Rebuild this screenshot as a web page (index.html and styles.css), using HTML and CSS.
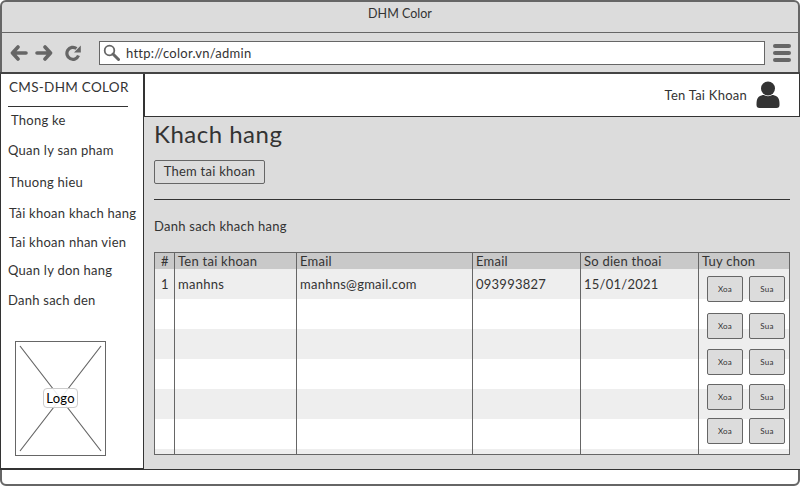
FILE: index.html
```html
<!DOCTYPE html>
<html lang="en">
  <head>
    <meta charset="utf-8" />
    <title>DHM Color</title>
    <link rel="stylesheet" href="styles.css">
  </head>

  <body>
    <div class="window">
      <div class="titlebar">DHM Color</div>

      <div class="toolbar">
        <svg class="nav-icon" width="18" height="16" viewBox="0 0 18 16"><path d="M8 2 2.500 8 8 14M3 8h13" fill="none" stroke="#666" stroke-width="3.600" stroke-linecap="round" stroke-linejoin="round"/></svg>
        <svg class="nav-icon" width="18" height="16" viewBox="0 0 18 16"><path d="M10 2l5.500 6L10 14M15 8H2" fill="none" stroke="#666" stroke-width="3.600" stroke-linecap="round" stroke-linejoin="round"/></svg>
        <svg class="nav-icon reload" width="17" height="16" viewBox="0 0 17 16"><path d="M13.500 10.500A6 6 0 1 1 11.500 3.500" fill="none" stroke="#666" stroke-width="3.200"/><path d="M9 7.500 15.800 7.500 15.800 .5z" fill="#666"/></svg>
        <div class="address">
          <svg width="17" height="17" viewBox="0 0 17 17"><circle cx="6.500" cy="6.500" r="4.800" fill="none" stroke="#666" stroke-width="1.800"/><path d="M10 10l5.500 5.500" stroke="#666" stroke-width="3" stroke-linecap="round"/></svg>
          <span>http://color.vn/admin</span>
        </div>
        <div class="menu-icon"><i></i><i></i><i></i></div>
      </div>

      <div class="content">
        <aside class="sidebar">
          <div class="brand">CMS-DHM COLOR</div>
          <ul class="side-nav">
            <li class="item-stats">Thong ke</li>
            <li class="item-products">Quan ly san pham</li>
            <li class="item-brands">Thuong hieu</li>
            <li class="item-customers">Tải khoan khach hang</li>
            <li class="item-staff">Tai khoan nhan vien</li>
            <li class="item-orders">Quan ly don hang</li>
            <li class="item-blacklist">Danh sach den</li>
          </ul>
          <div class="logo-box">
            <svg class="logo-cross" width="91" height="115" viewBox="0 0 91 115"><path d="M5 5l81 105M86 5 5 110" stroke="#666" stroke-width="1.200"/></svg>
            <span class="logo-label">Logo</span>
          </div>
        </aside>

        <div class="main">
          <header class="account">
            <span>Ten Tai Khoan</span>
            <svg width="24" height="28" viewBox="0 0 24 28"><circle cx="12" cy="7.500" r="7" fill="#333"/><path d="M0.500 24c0-3 0-6 2-8 2-1.500 4-2 5.500-2 1.500 1.500 6.500 1.500 8 0 1.500 0 3.500.5 5.500 2 2 2 2 5 2 8 0 2-1 3-3 3H3.500c-2 0-3-1-3-3z" fill="#333"/></svg>
          </header>

          <section class="panel">
            <h1>Khach hang</h1>
            <button class="add-btn">Them tai khoan</button>
            <hr>
            <div class="list-title">Danh sach khach hang</div>

            <div class="table">
              <div class="thead">
                <div class="col-num">#</div>
                <div class="col-name">Ten tai khoan</div>
                <div class="col-email">Email</div>
                <div class="col-email2">Email</div>
                <div class="col-phone">So dien thoai</div>
                <div class="col-opts">Tuy chon</div>
              </div>
              <div class="tbody">
                <div class="col-num">1</div>
                <div class="col-name">manhns</div>
                <div class="col-email">manhns@gmail.com</div>
                <div class="col-email2">093993827</div>
                <div class="col-phone">15/01/2021</div>
                <div class="col-opts actions">
                  <div class="action-row"><button>Xoa</button><button>Sua</button></div>
                  <div class="action-row"><button>Xoa</button><button>Sua</button></div>
                  <div class="action-row"><button>Xoa</button><button>Sua</button></div>
                  <div class="action-row"><button>Xoa</button><button>Sua</button></div>
                  <div class="action-row"><button>Xoa</button><button>Sua</button></div>
                </div>
              </div>
            </div>
          </section>
        </div>
      </div>

      <div class="statusbar"></div>
    </div>
  </body>
</html>
```

FILE: styles.css
```css
* {
  box-sizing: border-box;
}
body {
  margin: 0;
  width: 800px;
  height: 486px;
  overflow: hidden;
  background-color: #fff;
  font-family: Lato, Arial, sans-serif;
  letter-spacing: 0.25px;
  color: #333;
}
.window {
  display: flex;
  flex-direction: column;
  height: 486px;
  background-color: #dcdcdc;
  border: 2px solid #666;
  border-radius: 6px;
}
.titlebar {
  height: 31px;
  padding-top: 3px;
  text-align: center;
  font-size: 12.500px;
  letter-spacing: 0;
  line-height: 17px;
  border-bottom: 1px solid #666;
}
.toolbar {
  display: flex;
  align-items: center;
  height: 39px;
  padding: 0 7px 0 8px;
}
.nav-icon {
  margin-right: 7px;
}
.reload {
  margin-left: 5px;
  margin-right: 17px;
}
.address {
  display: flex;
  align-items: center;
  gap: 6px;
  width: 666px;
  height: 24px;
  padding-left: 3px;
  background-color: #fff;
  border: 1px solid #666;
  font-size: 13px;
}
.menu-icon {
  display: flex;
  flex-direction: column;
  gap: 3px;
  margin-left: 8px;
}
.menu-icon i {
  display: block;
  width: 18px;
  height: 4px;
  background-color: #666;
  border-radius: 2px;
}
.content {
  display: flex;
  height: 398px;
  margin-left: -2px;
  margin-right: -2px;
  border-top: 2px solid #444;
  border-bottom: 1px solid #333;
}
.sidebar {
  width: 144px;
  padding-left: 7px;
  background-color: #fff;
  border-left: 1px solid #333;
  border-right: 1px solid #333;
  border-bottom: 1px solid #333;
  font-size: 13px;
}
.brand {
  width: 120px;
  height: 33px;
  padding: 5px 0 0 1px;
  border-bottom: 1px solid #333;
  font-size: 13.500px;
  letter-spacing: 0.3px;
  line-height: 16px;
  white-space: nowrap;
}
.side-nav {
  margin: 0;
  padding: 0;
  list-style: none;
  line-height: 16px;
}
.side-nav li {
  white-space: nowrap;
}
.item-stats { margin: 5px 0 0 3px; }
.item-products { margin-top: 14px; }
.item-brands { margin: 16px 0 0 1px; }
.item-customers { margin: 15px 0 0 1px; }
.item-staff { margin: 13px 0 0 1px; }
.item-orders { margin-top: 12px; }
.item-blacklist { margin-top: 14px; }
.logo-box {
  position: relative;
  display: flex;
  align-items: center;
  justify-content: center;
  width: 91px;
  height: 115px;
  margin: 33px 0 0 7px;
  padding-bottom: 2px;
  border: 1px solid #666;
}
.logo-cross {
  position: absolute;
  top: -1px;
  left: -1px;
}
.logo-label {
  position: relative;
  padding: 1px 2px;
  background-color: rgba(255,255,255,0.9);
  border: 1px solid #ccc;
  border-radius: 4px;
  font-size: 13px;
  line-height: 16px;
  color: #000;
}
.main {
  display: flex;
  flex-direction: column;
  flex: 1;
}
.account {
  display: flex;
  align-items: center;
  justify-content: flex-end;
  gap: 9px;
  height: 43px;
  padding-right: 19px;
  background-color: #fff;
  border-left: 1px solid #333;
  border-bottom: 1px solid #333;
  border-right: 1px solid #333;
  font-size: 13px;
}
.panel {
  flex: 1;
  padding: 4px 10px 0 10px;
  background-color: #dcdcdc;
}
h1 {
  margin: 0;
  font-size: 24px;
  font-weight: 400;
  letter-spacing: 0.5px;
  line-height: 26px;
}
.add-btn {
  display: block;
  width: 111px;
  height: 24px;
  margin-top: 13px;
  padding: 0 0 2px;
  background-color: #dcdcdc;
  border: 1px solid #666;
  border-radius: 2px;
  font-family: inherit;
  font-size: 13px;
  letter-spacing: inherit;
  color: #333;
}
hr {
  height: 1px;
  margin: 15px 0 0 0;
  background-color: #333;
  border: 0;
}
.list-title {
  margin-top: 18px;
  font-size: 13px;
  line-height: 16px;
}
.table {
  width: 636px;
  height: 203px;
  margin-top: 18px;
  border: 1px solid #666;
  font-size: 13px;
  line-height: 16px;
}
.thead, .tbody {
  display: flex;
}
.thead {
  height: 16px;
  background-color: #c9c9c9;
}
.tbody {
  height: 185px;
  background: repeating-linear-gradient(#eee 0 30px, #fff 30px 60px);
}
.thead > div, .tbody > div {
  padding-left: 3px;
  border-left: 1px solid #666;
}
.tbody > div {
  padding-top: 7px;
}
.thead > .col-num, .tbody > .col-num {
  width: 19px;
  padding-left: 6px;
  border-left: 0;
}
.col-name { width: 122px; }
.col-email { width: 176px; }
.col-email2 { width: 108px; }
.col-phone { width: 118px; }
.col-opts { width: 91px; }
.tbody > .actions {
  padding: 7px 0 0 8px;
}
.action-row {
  display: flex;
  gap: 6px;
  margin-bottom: 11px;
}
.action-row:nth-child(2) { margin-bottom: 10px; }
.action-row:nth-child(3) { margin-bottom: 9px; }
.action-row:nth-child(4) { margin-bottom: 8px; }
.action-row button {
  width: 36px;
  height: 26px;
  padding: 0;
  background-color: #dcdcdc;
  border: 1px solid #666;
  border-radius: 2px;
  font-family: inherit;
  font-size: 8px;
  letter-spacing: inherit;
  color: #333;
}
.statusbar {
  flex: 1;
  background-color: #fff;
  border-radius: 0 0 5px 5px;
}
```
